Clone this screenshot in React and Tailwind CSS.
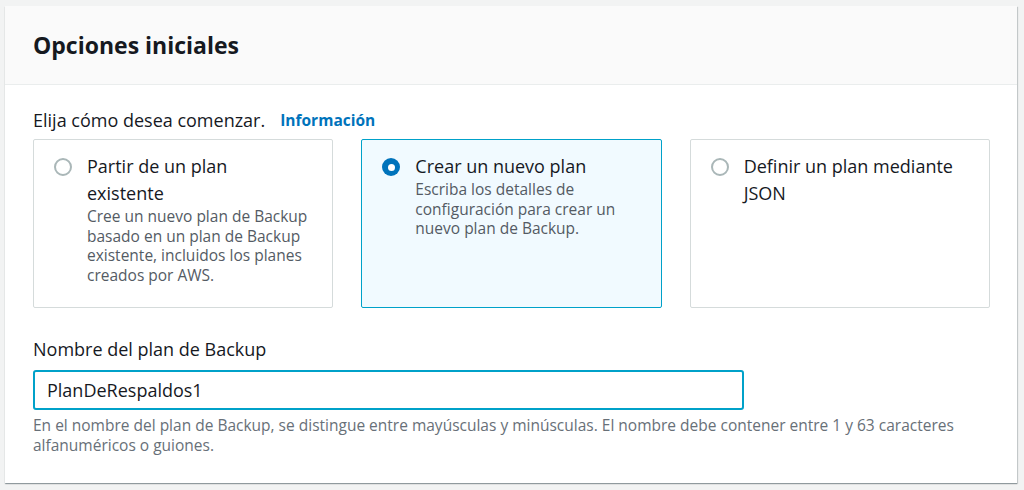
const font = { fontFamily: '"Open Sans", "Liberation Sans", sans-serif' };

const options = [
  {
    id: "existing",
    title: "Partir de un plan\nexistente",
    desc: "Cree un nuevo plan de Backup basado en un plan de Backup existente, incluidos los planes creados por AWS.",
  },
  {
    id: "new",
    title: "Crear un nuevo plan",
    desc: "Escriba los detalles de configuración para crear un nuevo plan de Backup.",
  },
  {
    id: "json",
    title: "Definir un plan mediante JSON",
    desc: null,
  },
];

function Radio({ checked }) {
  if (checked) {
    return (
      <span className="mt-[5px] w-[18px] h-[18px] shrink-0 rounded-full bg-[#0073bb] flex items-center justify-center">
        <span className="w-[7px] h-[7px] rounded-full bg-white" />
      </span>
    );
  }
  return <span className="mt-[5px] w-[18px] h-[18px] shrink-0 rounded-full border-2 border-[#aab7b8] bg-white" />;
}

export default function App() {
  const selected = "new";

  return (
    <div className="w-[1024px] h-[490px] bg-[#f2f3f3] pt-[6px] pl-[5px]" style={font}>
      <div className="w-[1012px] bg-white shadow-[0_1px_1px_rgba(0,28,36,0.3),1px_1px_1px_rgba(0,28,36,0.15)]">
        {/* cabecera */}
        <div className="h-[79px] px-[28px] flex items-center bg-[#fafafa] border-b border-[#eaeded]">
          <h2 className="text-[23px] font-bold text-[#16191f]">Opciones iniciales</h2>
        </div>

        <div className="px-[28px] pt-[22px] pb-[28px]">
          <div className="flex items-center gap-[15px] text-[18px] leading-[26px] text-[#16191f]">
            <span>Elija cómo desea comenzar.</span>
            <span className="text-[15.5px] font-bold text-[#0073bb]">Información</span>
          </div>

          <div className="mt-[6px] w-[957px] grid grid-cols-3 gap-[28px]">
            {options.map((o) => {
              const on = o.id === selected;
              return (
                <div
                  key={o.id}
                  className={
                    on
                      ? "flex gap-[15px] pl-[20px] pr-[22px] pt-[13px] pb-[22px] border border-[#00a1c9] bg-[#f1faff] rounded-[2px]"
                      : "flex gap-[15px] pl-[20px] pr-[22px] pt-[13px] pb-[22px] border border-[#d5dbdb] bg-white rounded-[2px]"
                  }
                >
                  <Radio checked={on} />
                  <div>
                    <div className="text-[18px] leading-[27px] text-[#16191f] whitespace-pre-line">{o.title}</div>
                    {o.desc && (
                      <div className="text-[15.5px] leading-[19.5px] text-[#545b64]">{o.desc}</div>
                    )}
                  </div>
                </div>
              );
            })}
          </div>

          <div className="mt-[28px] text-[18px] leading-[26px] text-[#16191f]">Nombre del plan de Backup</div>
          <div className="mt-[8px] w-[711px] h-[40px] border-2 border-[#00a1c9] rounded-[3px] px-[12px] flex items-center text-[18px] text-[#16191f]">
            PlanDeRespaldos1
          </div>
          <p className="mt-[6px] text-[15.5px] leading-[19.5px] text-[#687078] pr-[20px]">
            En el nombre del plan de Backup, se distingue entre mayúsculas y minúsculas. El nombre debe contener entre 1 y 63 caracteres alfanuméricos o guiones.
          </p>
        </div>
      </div>
    </div>
  );
}
